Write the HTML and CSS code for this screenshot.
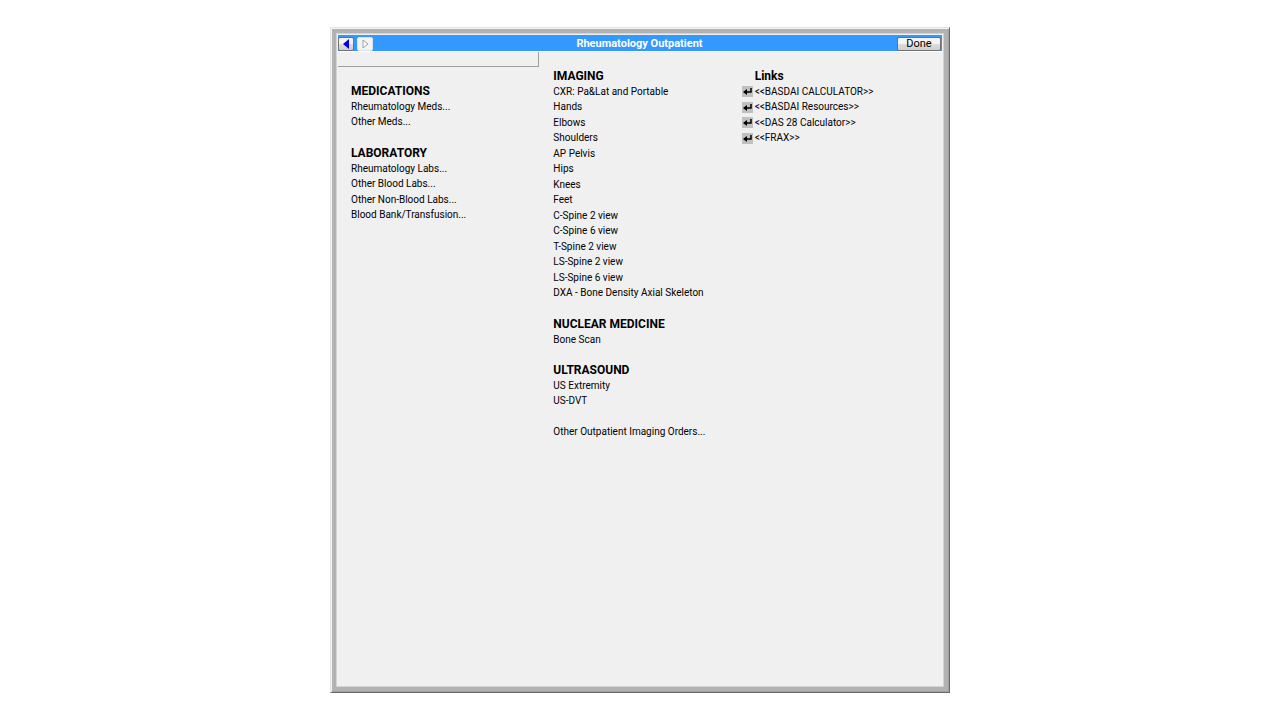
FILE: index.html
```
<!DOCTYPE html>
<html lang="en">
<head>
<meta charset="utf-8">
<title>Rheumatology Outpatient</title>
<link rel="stylesheet" href="styles.css">
</head>
<body>
<main class="window">
  <div class="frame">
    <header class="titlebar">
      <nav class="history">
        <button class="btn nav-btn" type="button" aria-label="Back"><svg width="16" height="12" viewBox="0 0 16 12"><path d="M11 1v10L5 6z" fill="#0000f0"/></svg></button>
        <button class="btn nav-btn nav-btn-off" type="button" aria-label="Forward" disabled><svg width="16" height="12" viewBox="0 0 16 12"><path d="M6 2v8l5-4z" fill="#fff" stroke="#a0a0a0"/></svg></button>
      </nav>
      <h1 class="title">Rheumatology Outpatient</h1>
      <button class="btn done" type="button">Done</button>
    </header>
    <div class="columns">
      <div class="column column-orders">
        <div class="strip"></div>
        <section class="group">
          <h2>MEDICATIONS</h2>
          <a href="#">Rheumatology Meds...</a>
          <a href="#">Other Meds...</a>
        </section>
        <section class="group">
          <h2>LABORATORY</h2>
          <a href="#">Rheumatology Labs...</a>
          <a href="#">Other Blood Labs...</a>
          <a href="#">Other Non-Blood Labs...</a>
          <a href="#">Blood Bank/Transfusion...</a>
        </section>
      </div>
      <div class="column column-imaging">
        <section class="group">
          <h2>IMAGING</h2>
          <a href="#">CXR: Pa&amp;Lat and Portable</a>
          <a href="#">Hands</a>
          <a href="#">Elbows</a>
          <a href="#">Shoulders</a>
          <a href="#">AP Pelvis</a>
          <a href="#">Hips</a>
          <a href="#">Knees</a>
          <a href="#">Feet</a>
          <a href="#">C-Spine 2 view</a>
          <a href="#">C-Spine 6 view</a>
          <a href="#">T-Spine 2 view</a>
          <a href="#">LS-Spine 2 view</a>
          <a href="#">LS-Spine 6 view</a>
          <a href="#">DXA - Bone Density Axial Skeleton</a>
        </section>
        <section class="group">
          <h2>NUCLEAR MEDICINE</h2>
          <a href="#">Bone Scan</a>
        </section>
        <section class="group">
          <h2>ULTRASOUND</h2>
          <a href="#">US Extremity</a>
          <a href="#">US-DVT</a>
        </section>
        <section class="group">
          <a href="#">Other Outpatient Imaging Orders...</a>
        </section>
      </div>
      <div class="column column-links">
        <svg width="0" height="0" class="defs"><symbol id="enter" viewBox="0 0 11 11"><path fill="#c0c0c0" d="M0 0h11v11H0z"/><path d="M9 2v4H4" fill="none" stroke="#000" stroke-width="1.500"/><path d="M1 6l4-3v6z"/></symbol></svg>
        <section class="group">
          <h2>Links</h2>
          <a href="#"><svg class="enter"><use href="#enter"/></svg>&lt;&lt;BASDAI CALCULATOR&gt;&gt;</a>
          <a href="#"><svg class="enter"><use href="#enter"/></svg>&lt;&lt;BASDAI Resources&gt;&gt;</a>
          <a href="#"><svg class="enter"><use href="#enter"/></svg>&lt;&lt;DAS 28 Calculator&gt;&gt;</a>
          <a href="#"><svg class="enter"><use href="#enter"/></svg>&lt;&lt;FRAX&gt;&gt;</a>
        </section>
      </div>
    </div>
  </div>
</main>
</body>
</html>
```
FILE: styles.css
```
* { box-sizing: border-box; }

body {
  margin: 0;
  padding: 27px 16px;
  background: #fff;
  color: #000;
  font-family: Roboto, "Liberation Sans", sans-serif;
  font-size: 10px;
}

.window {
  display: flex;
  max-width: 620px;
  min-height: calc(100vh - 54px);
  margin: 0 auto;
  padding: 1px;
  background: #b2b2b2;
  border: 1px solid;
  border-color: #e3e3e3 #696969 #696969 #e3e3e3;
  box-shadow: inset 1px 1px #f4f4f4, inset -1px -1px #a0a0a0;
}

.frame {
  flex: 1;
  margin: 4px;
  padding: 1px;
  background: #f0f0f0;
  border: 1px solid #d4d4d4;
}

.titlebar {
  display: grid;
  grid-template-columns: 1fr auto 1fr;
  align-items: end;
  height: 17px;
  padding-right: 1px;
  background: #3399ff;
  border-bottom: 1px solid #fff;
}

.history { display: flex; gap: 3px; }

.title {
  margin: 0;
  color: #fff;
  font-size: 11px;
  line-height: 15px;
}

.btn {
  height: 14px;
  padding: 0;
  border: 1px solid #707070;
  border-radius: 2px;
  background: linear-gradient(#f4f4f4 50%, #dcdcdc 50%, #d0d0d0);
  color: #000;
  font: 11px/12px Roboto, "Liberation Sans", sans-serif;
}

.nav-btn { width: 16px; overflow: hidden; }
.nav-btn svg { display: block; margin-left: -1px; }
.nav-btn-off { background: #f4f4f4; border-color: #d8e4f0; }
.done { width: 44px; justify-self: end; }

.columns {
  display: grid;
  grid-template-columns: 202fr 203fr 201fr;
}

.column-orders .group { padding-left: 13px; }

.strip {
  height: 15px;
  margin-bottom: 16px;
  border: solid #a0a0a0;
  border-width: 0 1px 1px 0;
}

.column-imaging { padding: 16px 0 0 14px; }
.column-links { padding: 16px 0 0; }
.defs { position: absolute; }

/* Rows alternate between 16px and 15px. */
.group {
  display: grid;
  grid-auto-rows: 16px 15px;
  margin-bottom: 15px;
  line-height: 16px;
  white-space: nowrap;
}

.group h2 { margin: 0; font-size: 12px; line-height: 16px; }
.group a { display: flex; align-items: center; color: #000; text-decoration: none; }
.column-links h2 { padding-left: 13px; }
.enter { width: 11px; height: 11px; margin-right: 2px; }
```
